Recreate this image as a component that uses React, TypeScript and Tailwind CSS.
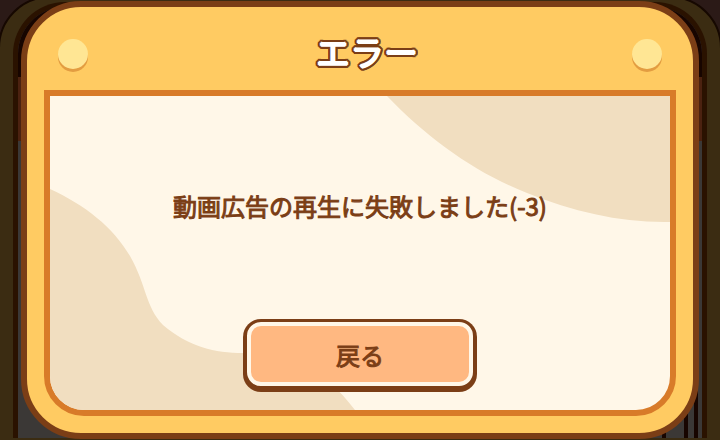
function Backdrop() {
  return (
    <div aria-hidden="true" className="absolute inset-0 -z-10 overflow-hidden bg-[#2b1a17]">
      <div className="absolute -inset-x-0.5 -top-1 -bottom-20 rounded-[52px] border-2 border-[#160801] bg-[#3b2c12]">
        <div className="absolute inset-x-[13px] top-1 bottom-20 flex flex-col overflow-hidden rounded-t-[52px] border-x-[5px] border-t-[5px] border-[#2a1200] bg-[#3b3836]">
          <div className="h-[70px] bg-[#170500]" />
          <div className="h-16 bg-[#4b2210]" />
          <div className="mt-auto flex h-12 justify-end gap-1.5 pr-1">
            <div className="mr-3 w-1 bg-[#170500]" />
            <div className="w-1 bg-[#170500]" />
            <div className="w-1 bg-[#170500]" />
          </div>
        </div>
      </div>
    </div>
  );
}

function Peg() {
  return (
    <span
      aria-hidden="true"
      className="size-[30px] rounded-full bg-[#ffe694] shadow-[0_3px_0_#e39d41]"
    />
  );
}

function PanelPattern() {
  return (
    <svg
      aria-hidden="true"
      className="absolute inset-0 -z-10 size-full"
      viewBox="0 0 620 314"
      preserveAspectRatio="none"
      fill="#f1dec0"
    >
      <path d="M337 0C378 43 426 77 477 97C524 116 572 127 620 126V0Z" />
      <path d="M0 93C35 109 63 131 80 160C97 190 95 210 113 229C139 251 165 257 193 257C235 257 270 268 305 314H0Z" />
    </svg>
  );
}

export default function App() {
  return (
    <div className="relative isolate flex min-h-screen flex-col overflow-hidden px-[21px] py-px font-['Noto_Sans_CJK_JP',sans-serif] text-[#7b3e16]">
      <Backdrop />
      <div
        role="dialog"
        aria-labelledby="dialog-title"
        aria-describedby="dialog-message"
        className="flex flex-1 flex-col rounded-[60px] border-6 border-[#7b3e16] bg-[#ffcb62] px-[17px] pb-[17px]"
      >
        <header className="flex h-[83px] items-center justify-between px-[14px] pt-[10px]">
          <Peg />
          <h1
            id="dialog-title"
            className="pb-1 pl-[14px] text-[34px] leading-10 font-normal text-white [text-shadow:1px_0_#fff,-1px_0_#fff,0_1px_#fff,0_-1px_#fff,3px_0_#7b3e16,-3px_0_#7b3e16,0_3px_#7b3e16,0_-3px_#7b3e16,3px_1px_#7b3e16,3px_-1px_#7b3e16,-3px_1px_#7b3e16,-3px_-1px_#7b3e16,1px_3px_#7b3e16,-1px_3px_#7b3e16,1px_-3px_#7b3e16,-1px_-3px_#7b3e16,2px_2px_#7b3e16,-2px_2px_#7b3e16,2px_-2px_#7b3e16,-2px_-2px_#7b3e16]"
          >
            エラー
          </h1>
          <Peg />
        </header>
        <main className="relative isolate flex flex-1 flex-col items-center overflow-hidden rounded-b-[40px] border-6 border-[#d87b29] bg-[#fff7e8] pb-[18px]">
          <PanelPattern />
          <div className="flex flex-1 items-center pb-1">
            <p id="dialog-message" className="text-2xl font-normal [-webkit-text-stroke:1px_#7b3e16]">
              動画広告の再生に失敗しました(-3)
            </p>
          </div>
          <button
            type="button"
            className="w-[234px] cursor-pointer rounded-[18px] bg-[#7b3e16] px-1 pt-[3px] pb-[6px]"
          >
            <span className="flex h-16 items-center justify-center rounded-[14px] border-4 border-[#fff7e8] bg-[#ffb881] pt-0.5 text-2xl font-normal [-webkit-text-stroke:1px_#7b3e16]">
              戻る
            </span>
          </button>
        </main>
      </div>
    </div>
  );
}
